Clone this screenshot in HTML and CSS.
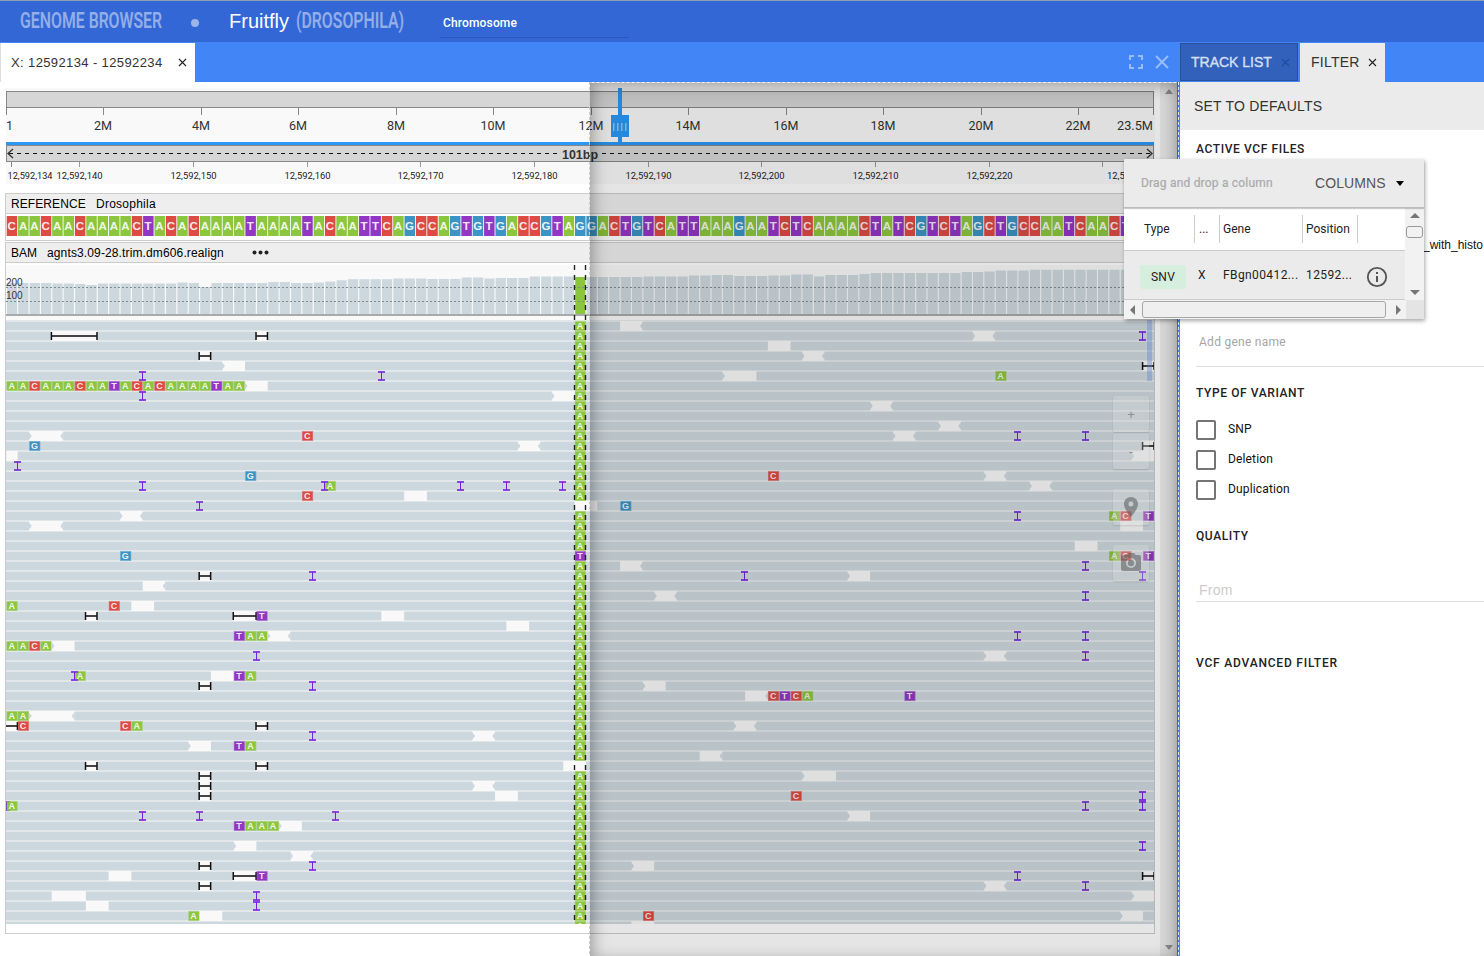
FILE: index.html
```html
<!DOCTYPE html>
<html lang="en">
<head>
<meta charset="utf-8">
<title>Genome Browser</title>
<link rel="stylesheet" href="styles.css">
</head>
<body>
<header class="topbar">
  <svg class="brand" width="410" height="41">
    <text class="brand-dim" x="20" y="27" textLength="142" lengthAdjust="spacingAndGlyphs">GENOME BROWSER</text>
    <circle class="brand-dot" cx="195" cy="22" r="4"/>
    <text class="brand-name" x="229" y="27" textLength="60" lengthAdjust="spacingAndGlyphs">Fruitfly</text>
    <text class="brand-dim" x="296" y="27" textLength="108" lengthAdjust="spacingAndGlyphs">(DROSOPHILA)</text>
  </svg>
  <div class="chromosome">Chromosome</div>
</header>
<div class="workspace">
  <section class="left">
    <div class="tabs">
      <div class="tab tab-region"><span class="region-text">X: 12592134 - 12592234</span><svg width="9" height="9"><path class="x-dark" d="M1 1L8 8M8 1L1 8"/></svg></div>
      <div class="window-actions">
        <svg width="16" height="16"><path class="action" d="M2 6V2H6M10 2H14V6M14 10V14H10M6 14H2V10"/></svg>
        <svg width="16" height="16"><path class="action" d="M2 2L14 14M14 2L2 14"/></svg>
      </div>
    </div>
    <div class="stage">
      <div class="tracks">
        <svg id="ruler" class="ruler" width="1149" height="96"></svg>
        <div class="track">
          <div class="track-head"><span class="ref-label">REFERENCE</span><span class="ref-name">Drosophila</span></div>
          <svg id="reference" width="1148" height="26"></svg>
        </div>
        <div class="track bam">
          <div class="track-head"><span class="bam-label">BAM</span><span class="bam-name">agnts3.09-28.trim.dm606.realign</span><svg class="dots" width="17" height="5"><circle cx="2.5" cy="2.5" r="2"/><circle cx="8.5" cy="2.5" r="2"/><circle cx="14.5" cy="2.5" r="2"/></svg></div>
          <svg id="bam" width="1148" height="670"></svg>
        </div>
      </div>
      <div class="scroll"><i class="arrow up"></i><i class="arrow down"></i></div>
      <div class="drop-shade"></div>
      <div class="tools">
        <div class="tool">+</div>
        <div class="tool">-</div>
        <div class="tool pin"><svg width="24" height="24" viewBox="0 0 24 24"><path d="M12 2C8.1 2 5 5.1 5 9c0 5.200 7 13 7 13s7-7.800 7-13c0-3.900-3.100-7-7-7zm0 9.500a2.500 2.500 0 1 1 0-5 2.500 2.500 0 0 1 0 5z"/></svg></div>
        <div class="tool cam"><svg width="24" height="24" viewBox="0 0 24 24"><circle cx="12" cy="12" r="3.200"/><path fill-rule="evenodd" d="M9 2L7.200 4H4c-1.100 0-2 .9-2 2v12c0 1.100.9 2 2 2h16c1.100 0 2-.9 2-2V6c0-1.100-.9-2-2-2h-3.200L15 2H9zm3 15a5 5 0 1 1 0-10 5 5 0 0 1 0 10z"/></svg></div>
      </div>
    </div>
  </section>
  <div class="split"></div>
  <aside class="right">
    <div class="tabs">
      <div class="tab tab-list"><span>TRACK LIST</span><svg width="9" height="9"><path class="x-dim" d="M1 1L8 8M8 1L1 8"/></svg></div>
      <div class="tab tab-filter"><span>FILTER</span><svg width="9" height="9"><path class="x-dark" d="M1 1L8 8M8 1L1 8"/></svg></div>
    </div>
    <div class="defaults">SET TO DEFAULTS</div>
    <div class="filters">
      <h3 class="h-active">ACTIVE VCF FILES</h3>
      <div class="file">_with_histo</div>
      <div class="field gene">Add gene name</div>
      <h3 class="h-type">TYPE OF VARIANT</h3>
      <div class="check"><i></i>SNP</div>
      <div class="check"><i></i>Deletion</div>
      <div class="check"><i></i>Duplication</div>
      <h3 class="h-quality">QUALITY</h3>
      <div class="field from">From</div>
      <h3 class="h-advanced">VCF ADVANCED FILTER</h3>
    </div>
  </aside>
</div>
<div class="popup">
  <div class="popup-head"><span class="hint">Drag and drop a column</span><span class="columns">COLUMNS</span><i class="caret"></i></div>
  <div class="popup-body">
    <div class="grid-wrap">
      <div class="row head"><span class="c1">Type</span><span class="c2">...</span><span class="c3">Gene</span><span class="c4">Position</span><span class="c5"></span></div>
      <div class="row data"><span class="c1"><b>SNV</b></span><span class="c2">X</span><span class="c3">FBgn00412...</span><span class="c4">12592...</span><span class="c5"><svg width="22" height="22"><circle class="info-ring" cx="11" cy="11" r="9.200"/><path class="info-mark" d="M10 6h2v2h-2zM10 10h2v6h-2z"/></svg></span></div>
    </div>
    <div class="vscroll"><i class="arrow up"></i><b></b><i class="arrow down"></i></div>
  </div>
  <div class="hscroll"><i class="arrow left-arrow"></i><b></b><i class="arrow right-arrow"></i><em></em></div>
</div>
<script src="app.js"></script>
</body>
</html>
```
FILE: styles.css
```css
* { box-sizing: border-box; }
body { margin: 0; width: 1484px; height: 956px; overflow: hidden; position: relative; background: #fff; font-family: "Liberation Sans", Arial, sans-serif; font-size: 12px; color: #222; }
svg { display: block; flex: none; }
.topbar { height: 42px; display: flex; border-top: 1px solid #8f9db5; background: #3367d6; }
.brand-dim { font: 500 22.5px "Roboto", sans-serif; fill: #95afe9; stroke: #95afe9; stroke-width: .2; }
.brand-dot { fill: #9bb4ea; }
.brand-name { font: 20px "Liberation Sans", sans-serif; fill: #fff; }
.chromosome { margin-left: 30px; width: 189px; height: 37px; padding: 15px 0 0 3px; border-bottom: 1px solid #2c56bd; color: #fff; font: 500 12px/15px "Roboto", sans-serif; letter-spacing: .15px; }
.workspace { display: flex; height: 914px; background: #4285f6; }
.left { width: 1178px; }
.tabs { height: 40px; padding-top: 1px; display: flex; background: #4285f6; }
.tab { display: flex; align-items: center; }
.tab-region { width: 195px; padding-left: 11px; background: #fff; border-left: 1px solid #ddd; font-size: 13px; color: #333; }
.region-text { width: 167px; letter-spacing: .38px; white-space: nowrap; margin-left: -1px; }
.x-dark { stroke: #222; stroke-width: 1.100; }
.x-dim { stroke: #24499a; stroke-width: 1.100; }
.window-actions { display: flex; gap: 10px; align-items: center; margin-left: auto; padding: 0 8px 1px 0; }
.action { fill: none; stroke: #9abdfa; stroke-width: 2; }
.stage { position: relative; height: 874px; display: flex; overflow: hidden; background: #fff; }
.tracks { width: 1160px; padding: 6px 0 0 5px; }
.ruler { margin: 0 0 9px 1px; background: #f9f9f9; }
.track { width: 1150px; height: 48px; border: 1px solid #ccc; margin-bottom: 1px; }
.bam { height: 692px; }
.track-head { height: 20px; display: flex; align-items: center; padding-left: 5px; background: #eee; border-bottom: 1px solid #ccc; color: #000; white-space: nowrap; }
.ref-label { width: 85px; letter-spacing: .08px; }
.ref-name { letter-spacing: .25px; }
.bam-label { width: 36px; }
.bam-name { width: 205px; letter-spacing: .13px; }
.dots { fill: #222; }
.scroll { width: 18px; background: #f1f1f1; display: flex; flex-direction: column; justify-content: space-between; align-items: center; padding: 7px 0 6px; }
.arrow { display: block; border: 4px solid transparent; width: 0; height: 0; flex: none; }
.up { border-bottom: 5px solid #777; border-top: 0; }
.down { border-top: 5px solid #777; border-bottom: 0; }
.scroll .up { border-bottom-color: #999; }
.scroll .down { border-top-color: #999; }
.drop-shade { position: absolute; left: 590px; top: 1px; width: 588px; height: 880px; background: rgba(0,0,0,.1); box-shadow: inset 0 0 18px rgba(0,0,0,.42); outline: 1px dashed #ccc; }
.split { width: 2px; margin-top: 40px; background: repeating-linear-gradient(#dce6f5 0 3px, #3b7def 3px 5px); border-right: 1px solid #4285f6; box-shadow: -1px 0 #3266b8; z-index: 1; }
.tools { position: absolute; left: 1113px; top: 314px; width: 36px; display: flex; flex-direction: column; gap: 1px; }
.tool { height: 36px; display: flex; align-items: center; justify-content: center; border-radius: 2px; background: rgba(225,225,225,.28); box-shadow: 0 1px 2px rgba(0,0,0,.12); color: #888f92; font-size: 13px; }
.tool svg { fill: rgba(90,90,90,.55); }
.pin { margin-top: 19px; }
.cam { margin-top: 19px; }
.right { width: 304px; overflow: hidden; background: #fff; }
.tab-list { width: 118px; height: 38px; padding-left: 10px; background: #3161bb; border: 1px solid #294f9d; color: #d5dff1; font-size: 14px; -webkit-text-stroke: .4px #d5dff1; }
.tab-list span { width: 90px; }
.tab-filter { width: 85px; margin-left: 2px; padding: 0 0 2px 11px; background: #ebebeb; font-size: 14px; letter-spacing: .25px; color: #333; }
.tab-filter span { width: 57px; }
.tab-list svg, .tab-filter svg { margin-top: 1px; }
.defaults { height: 48px; padding-left: 14px; background: #ebebeb; font-size: 14px; line-height: 48px; letter-spacing: .22px; color: #333; }
.filters { padding-left: 16px; }
h3 { margin: 0; font: 500 12px/14px "Roboto", sans-serif; letter-spacing: .6px; color: #222; }
.h-active { padding-top: 12px; }
.file { margin-top: 81px; padding-left: 227px; height: 28px; line-height: 16px; color: #111; white-space: nowrap; }
.field { border-bottom: 1px solid #ddd; width: 300px; color: #a6a6a6; }
.gene { height: 102px; padding: 69px 0 0 3px; font: 12px/16px "Roboto", sans-serif; letter-spacing: .27px; }
.h-type { margin: 19px 0 20px; }
.check { height: 30px; display: flex; align-items: flex-start; font: 12px/18px "Roboto", sans-serif; color: #111; letter-spacing: .15px; }
.check i { width: 20px; height: 20px; margin-right: 12px; border: 2px solid #757575; border-radius: 2px; }
.h-quality { margin-top: 19px; }
.from { height: 59px; padding: 38px 0 0 3px; font-size: 14px; line-height: 18px; letter-spacing: .25px; color: #ccc; }
.h-advanced { margin-top: 54px; letter-spacing: .8px; }
.popup { position: absolute; z-index: 2; left: 1124px; top: 159px; width: 300px; height: 160px; background: #ebebeb; box-shadow: 1px 2px 4px rgba(0,0,0,.35); font: 12px "Roboto", sans-serif; }
.popup-head { height: 49px; display: flex; align-items: center; padding-left: 17px; border-bottom: 1px solid #bbb; box-shadow: 0 1px 1px rgba(0,0,0,.2); position: relative; }
.hint { width: 174px; color: #aaa; letter-spacing: .2px; -webkit-text-stroke: .2px #aaa; }
.columns { width: 81px; font: 14px "Liberation Sans", sans-serif; letter-spacing: .1px; color: #555; }
.caret { border: 4px solid transparent; border-top: 5px solid #000; border-bottom: 0; }
.popup-body { height: 92px; display: flex; }
.grid-wrap { width: 281px; }
.row { display: flex; }
.head { height: 43px; padding-top: 7px; background: #fff; border-bottom: 1px solid #ccc; }
.row span { height: 28px; line-height: 28px; }
.head span { border-right: 1px solid #ccc; }
.c1 { width: 71px; padding-left: 20px; }
.c2 { width: 25px; padding-left: 4px; }
.c3 { width: 83px; padding-left: 3px; }
.c4 { width: 55px; padding-left: 3px; white-space: nowrap; }
.row .c5 { width: 43px; border: 0; }
.data { height: 49px; padding-top: 10px; border-bottom: 1px solid #ccc; }
.data .c1 { padding-left: 16px; }
.data b { display: block; width: 46px; height: 24px; margin-top: 4px; line-height: 24px; text-align: center; font-weight: 400; background: #d5eedd; border-radius: 3px; letter-spacing: .3px; }
.data .c2 { padding-left: 3px; }
.data .c3, .data .c4 { padding-left: 3px; letter-spacing: .4px; }
.data .c5 { padding: 5px 0 0 8px; }
.info-ring { fill: none; stroke: #555; stroke-width: 1.800; }
.info-mark { fill: #555; }
.vscroll { width: 19px; display: flex; flex-direction: column; align-items: center; padding: 5px 0; background: #f2f2f2; }
.vscroll .up, .vscroll .down { border-left-width: 5px; border-right-width: 5px; }
.vscroll b { width: 17px; height: 12px; margin: 8px 0 auto; border: 1px solid #999; border-radius: 3px; }
.hscroll { height: 19px; display: flex; align-items: center; padding-left: 6px; background: #f2f2f2; }
.hscroll b { width: 244px; height: 17px; margin: 0 10px 0 7px; border: 1px solid #a6a6a6; border-radius: 3px; background: #efefef; }
.left-arrow { border: 5px solid transparent; border-right-color: #777; border-left: 0; }
.right-arrow { border: 5px solid transparent; border-left-color: #777; border-right: 0; }
.hscroll em { width: 18px; height: 19px; margin-left: auto; background: #e4e4e4; }
.tick-label { font: 12.5px "Roboto", sans-serif; fill: #333; }
.small-label { font: 9.5px "Roboto", sans-serif; fill: #222; }
.bp-label { font: bold 12px "Liberation Sans", sans-serif; fill: #333; }
.base { font: bold 11.5px "Liberation Sans", sans-serif; fill: #fff; fill-opacity: .9; text-anchor: middle; }
.base-small { font: bold 9px "Liberation Sans", sans-serif; fill: #fff; fill-opacity: .9; text-anchor: middle; }
.axis { font: 10px "Liberation Sans", sans-serif; fill: #333; }
```
FILE: app.js
```javascript
const W = 1148, N = 101, P = W / N;
const COLORS = { A: '#8cc63f', C: '#dd4b45', G: '#3c94c4', T: '#9236c4' };
const X = i => +(i * P).toFixed(2);
const rect = (x, y, w, h, fill, extra = '') => `<rect x="${x}" y="${y}" width="${w}" height="${h}" fill="${fill}" ${extra}/>`;
const label = (x, y, t, len, cls, anchor = 'middle') =>
  `<text class="${cls}" x="${x}" y="${y}" text-anchor="${anchor}" textLength="${len}" lengthAdjust="spacingAndGlyphs">${t}</text>`;

function drawRuler() {
  let s = rect(0, 3, 1148, 17, '#888') + rect(1, 4, 1146, 15, '#d6d6d6');
  s += rect(0, 19, 1, 8, '#888') + rect(1147, 19, 1, 8, '#888');
  s += label(0, 42, '1', 7, 'tick-label', 'start');
  for (let m = 2; m <= 22; m += 2) {
    const x = Math.round(48.77 * m - 0.5);
    s += rect(x, 20, 1, 7, '#888') + label(x, 42, m + 'M', m < 10 ? 18 : 25, 'tick-label');
  }
  s += label(1147, 42, '23.5M', 36, 'tick-label', 'end');
  s += rect(0, 54, 1148, 4, '#2b98f5');
  s += rect(0, 57, 1148, 17, '#888') + rect(1, 58, 1146, 15, '#d6d6d6');
  s += '<path d="M3 65.500H553M596 65.500H1144" stroke="#111" stroke-dasharray="4 4"/>';
  s += '<path d="M7 61L2 65.500L7 70M1141 61L1146 65.500L1141 70" fill="none" stroke="#333" stroke-width="1.300"/>';
  s += label(574, 71, '101bp', 36, 'bp-label');
  s += rect(5, 74, 1, 5, '#888') + label(1.500, 91, '12,592,134', 45, 'small-label', 'start');
  for (let i = 6; i < N; i += 10) {
    const x = Math.round(X(i + 0.5) - 0.6);
    s += rect(x, 74, 1, 5, '#999');
    s += i < 96 ? label(x + 0.5, 91, '12,592,' + (134 + i), 46, 'small-label') : label(1147, 91, '12,592,230', 46, 'small-label', 'end');
  }
  s += rect(612, 0, 4, 54, '#2b98f5') + rect(605, 27, 18, 22, '#2b98f5');
  for (let k = 0; k < 4; k++) s += rect(607 + 4 * k, 35, 1.500, 8, '#8cc6f8');
  document.getElementById('ruler').innerHTML = s;
}

function drawReference() {
  const seq = 'CAACAACAAAACTACACAAAATAAAATACAATTCAGCCAGTGTGACCGTAGGACTGTCATTAAAGAATCTCAAAACTATCGTCTAGCTGCCAATCAACT';
  document.getElementById('reference').innerHTML = [...seq].map((b, i) =>
    rect(X(i) + 0.7, 2, 10.5, 20, COLORS[b]) + `<text class="base" x="${X(i + 0.5)}" y="16">${b}</text>`).join('');
}

// Tops of the coverage bars, as [first column, y] steps.
const COVERAGE = [[0, 20], [4, 20.5], [6, 21], [7, 22], [8, 20.5], [15, 19.5], [16, 20], [17, 24], [18, 20], [23, 19], [25, 20], [27, 19.5], [28, 18.5],
  [29, 17.3], [30, 16.2], [34, 15.5], [37, 16], [40, 14.5], [42, 15.5], [43, 15], [46, 13.5], [50, 14], [55, 14], [56, 13.5], [60, 12.5], [62, 12], [64, 13],
  [67, 12.5], [69, 11.5], [71, 13.5], [72, 12], [75, 11], [76, 10], [84, 9], [86, 8.5], [87, 7.5], [90, 6.8], [101, 6]];

// One entry per read row: g = gap (start, end, arrow ends), d = deletion, i = insertion, b = bases.
const ROWS = {
  0: 'g54,56,R', 1: 'd4,8 d22,23 g85,87,LR i100', 2: 'g67,69', 3: 'd17,18 g70,72,LR', 4: 'g19,21,L d100,101',
  5: 'i12 i33 g63,66,L b87,A', 6: 'b0,AACAAACAATACACAAAATAA g21,23,L', 7: 'i12 g48,50,L', 8: 'g76,78,LR', 10: 'g82,84,LR',
  11: 'g2,5,LR b26,C g78,80,LR i89 i95', 12: 'b2,G g45,47,LR d100,101', 13: 'g0,1 g99,101,L', 14: 'i1', 15: 'b21,G b67,C g86,88,LR',
  16: 'i12 b28,A i28 i40 i44 i49 g90,92,LR', 17: 'b26,C g35,37', 18: 'i17 g50,52 b54,G', 19: 'g10,12,LR i89 b97,AC b100,T',
  20: 'g2,5,LR g98,100', 22: 'g94,96', 23: 'b10,G b97,AC b100,T', 24: 'g54,56,R i95', 25: 'd17,18 i27 i65 g74,76,L i100',
  26: 'g12,14,R', 27: 'g57,59,LR i95', 28: 'b0,A b9,C g11,13', 29: 'd7,8 d20,22 b22,T g33,35', 30: 'g44,46', 31: 'b20,TAA g23,25,LR i89 i95',
  32: 'b0,AACA g4,6,L', 33: 'i22 g86,88,LR i95', 35: 'b6,A i6 g18,20 b20,TA', 36: 'd17,18 i27 g56,58,L', 37: 'g65,67,R b67,CTCA b79,T',
  39: 'b0,AA g2,6,LR', 40: 'd-1,1 b1,C b10,CA d22,23 g64,66,LR', 41: 'i27 g41,43,LR', 42: 'g16,18,L b20,TA', 43: 'g61,63,R', 44: 'd7,8 d22,23 g49,51',
  45: 'd17,18 g70,73,L', 46: 'd17,18 g41,43,LR', 47: 'd17,18 g43,45 b69,C i100', 48: 'i0 b0,A i95 i100', 49: 'i12 i17 i29 g74,76,L',
  50: 'b20,TAAA g24,26,L', 52: 'g20,22,L i100', 53: 'g25,27,LR', 54: 'd17,18 i27 g55,57,L', 55: 'g9,11 d20,22 b22,T i89 d100,101',
  56: 'd17,18 g86,88,LR i95', 57: 'g4,7 i22 g99,101,L', 58: 'g7,9 i22', 59: 'b16,A g17,19 b56,C g98,100,L', 60: 'g55,57'
};

function drawBase(i, y, b) {
  return rect(X(i) + 0.5, y, P - 0.3, 10, COLORS[b], 'fill-opacity=".65"') + rect(X(i) + 1.2, y + 1, 9.6, 8, COLORS[b]) +
    `<text class="base-small" x="${X(i + 0.5)}" y="${y + 8.2}">${b}</text>`;
}

function drawItem(item, y) {
  const p = item.slice(1).split(','), x = X(+p[0]);
  if (item[0] === 'b') return [...p[1]].map((b, k) => drawBase(+p[0] + k, y, b)).join('');
  if (item[0] === 'i') {
    const c = Math.floor(x);
    return rect(c - 3, y, 7, 2, '#8a45dc') + rect(c - 3, y + 8, 7, 2, '#8a45dc') + rect(c, y + 1, 1, 8, '#7420dc');
  }
  const e = X(+p[1]), w = e - x;
  if (item[0] === 'd') return rect(x, y, w, 10, '#f9f9f9') + rect(x, y + 4, w, 2, '#444') + rect(x - 0.8, y + 1, 1.5, 8, '#111') + rect(e - 0.7, y + 1, 1.5, 8, '#111');
  let s = rect(x + 0.3, y, w, 10, '#f9f9f9');
  if ((p[2] || '').includes('L')) s += `<path d="M${x} ${y + 1}L${x + 3} ${y + 5}L${x} ${y + 9}z" fill="#cdd8de"/>`;
  if ((p[2] || '').includes('R')) s += `<path d="M${e + 0.5} ${y + 1}L${e - 2.5} ${y + 5}L${e + 0.5} ${y + 9}z" fill="#cdd8de"/>`;
  return s;
}

function drawBam() {
  let s = rect(0, 2, W, 56, '#f9f9f9');
  COVERAGE.forEach(([from, top], k) => {
    const to = (COVERAGE[k + 1] || [N])[0];
    for (let i = from; i < to; i++) s += rect(X(i) + 0.9, top, 10.2, 51 - top, i === 50 ? '#8cc63f' : '#cdd8de');
  });
  s += `<path d="M0 24.500H${W}M0 38.500H${W}" stroke="#7f8b90" stroke-dasharray="2 2"/>` + rect(0, 51, W, 2, '#aaa');
  s += '<text class="axis" x="0" y="23">200</text><text class="axis" x="0" y="36">100</text>';
  s += rect(0, 58, W, 603, '#cdd8de');
  for (let k = 0; k <= 60; k++) s += rect(0, 57 + 10 * k, W, 2, '#e2e8ea');
  let reads = '';
  for (let k = 0; k <= 60; k++) {
    const y = 58 + 10 * k;
    if (k !== 18 && k !== 44) reads += drawBase(50, y, k === 23 ? 'T' : 'A');
    (ROWS[k] || '').split(' ').filter(Boolean).forEach(item => { reads += drawItem(item, y); });
  }
  s += `<clipPath id="reads"><rect width="${W}" height="661"/></clipPath><g clip-path="url(#reads)">${reads}</g>`;
  s += '<path d="M568.500 2V661M579.500 2V661" stroke="#222" stroke-width="1.400" stroke-dasharray="5 5"/>';
  s += rect(1141, 57, 5, 61, '#6f96e8', 'fill-opacity=".4"');
  document.getElementById('bam').innerHTML = s;
}

drawRuler();
drawReference();
drawBam();
```
